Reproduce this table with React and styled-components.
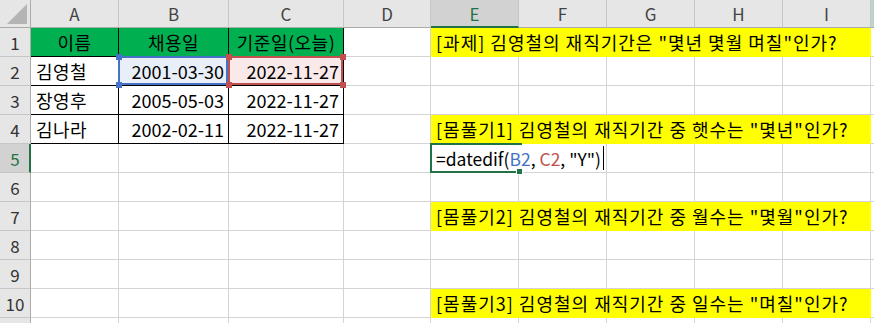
import React from "react";
import styled, { createGlobalStyle, css } from "styled-components";

const Global = createGlobalStyle`
  html, body { margin: 0; padding: 0; background: #fff; overflow: hidden; }
  * { box-sizing: border-box; }
`;

const FONT = `"Noto Sans CJK KR", "Noto Sans", sans-serif`;
const GRID = "#d4d4d4";
const GREEN = "#217346";

const Sheet = styled.div`
  display: grid;
  grid-template-columns: 31px 88px 110px 115px 87px 88px 88px 88px 88px 88px 4px;
  grid-template-rows: 28px repeat(11, 29px);
  width: 874px;
  height: 323px;
  overflow: hidden;
  font-family: ${FONT};
  color: #000;
`;

const Corner = styled.div`
  background: #e6e6e6;
  border-right: 1px solid #ababab;
  border-bottom: 1px solid #ababab;
  position: relative;
  &::after {
    content: "";
    position: absolute;
    right: 3px;
    bottom: 3px;
    width: 0;
    height: 0;
    border-left: 20px solid transparent;
    border-bottom: 20px solid #b4b4b4;
  }
`;

const ColHead = styled.div`
  background: ${(p) => (p.$sel ? "#d2d2d2" : "#e6e6e6")};
  color: ${(p) => (p.$sel ? GREEN : "#444")};
  border-right: 1px solid #c6c6c6;
  border-bottom: ${(p) => (p.$sel ? `2px solid ${GREEN}` : "1px solid #ababab")};
  display: flex;
  align-items: center;
  justify-content: center;
  font-size: 17px;
  padding-top: ${(p) => (p.$sel ? "1px" : "0")};
`;

const EdgeHead = styled.div`
  background: #b9d6c7;
  border-bottom: 1px solid #ababab;
`;

const RowHead = styled.div`
  background: ${(p) => (p.$sel ? "#d2d2d2" : "#e6e6e6")};
  color: ${(p) => (p.$sel ? GREEN : "#333")};
  border-right: ${(p) => (p.$sel ? `2px solid ${GREEN}` : "1px solid #ababab")};
  border-bottom: 1px solid #c6c6c6;
  display: flex;
  align-items: center;
  justify-content: center;
  font-size: 17px;
  padding-left: ${(p) => (p.$sel ? "1px" : "0")};
`;

const Cell = styled.div`
  grid-column: span ${(p) => p.$span || 1};
  position: relative;
  background: ${(p) => p.$bg || "#fff"};
  border-right: 1px solid ${(p) => p.$line || GRID};
  border-bottom: 1px solid ${(p) => p.$line || GRID};
  display: flex;
  align-items: center;
  justify-content: ${(p) =>
    p.$align === "right" ? "flex-end" : p.$align === "center" ? "center" : "flex-start"};
  padding: 0 ${(p) => (p.$align === "right" ? "4px" : "5px")};
  font-size: 18px;
  letter-spacing: ${(p) => p.$track || "0"};
  white-space: nowrap;
  overflow: visible;
  ${(p) =>
    p.$ref &&
    css`
      &::after {
        content: "";
        position: absolute;
        top: -1px;
        left: -1px;
        right: 0;
        bottom: 0;
        border: 2px solid ${p.$ref};
        pointer-events: none;
      }
    `}
`;

const Handle = styled.span`
  position: absolute;
  width: 6px;
  height: 6px;
  background: ${(p) => p.$color};
  ${(p) => (p.$top ? "top: -3px;" : "bottom: -3px;")}
  ${(p) => (p.$left ? "left: -3px;" : "right: -3px;")}
  z-index: 2;
`;

const Editor = styled.div`
  grid-column: span 2;
  position: relative;
  z-index: 1;
  background: #fff;
  border-right: 1px solid ${GRID};
  border-bottom: 1px solid ${GRID};
  display: flex;
  align-items: center;
  padding-left: 5px;
  font-size: 17.5px;
  white-space: pre;
  &::before {
    content: "";
    position: absolute;
    top: -1px;
    left: -1px;
    width: 90px;
    bottom: -1px;
    border: 2px solid ${GREEN};
    border-right: none;
    pointer-events: none;
  }
`;

const FillHandle = styled.span`
  position: absolute;
  left: 85px;
  bottom: -3px;
  width: 5px;
  height: 5px;
  background: ${GREEN};
  border: 1px solid #fff;
  box-sizing: content-box;
`;

const Ref = styled.span`
  color: ${(p) => p.$color};
`;

const Caret = styled.span`
  display: inline-block;
  width: 1px;
  height: 24px;
  background: #000;
  margin-left: 2px;
`;

const EdgeCell = styled.div`
  background: #fff;
  border-bottom: 1px solid ${GRID};
`;

const COLS = ["A", "B", "C", "D", "E", "F", "G", "H", "I"];
const BLUE = "#4472c4";
const RED = "#c0504d";
const YELLOW = "#ffff00";
const BLACK = "#000";

const blanks = (n, key) =>
  Array.from({ length: n }, (_, i) => <Cell key={`${key}-${i}`} />);

const people = [
  ["김영철", "2001-03-30", "2022-11-27"],
  ["장영후", "2005-05-03", "2022-11-27"],
  ["김나라", "2002-02-11", "2022-11-27"],
];

const notes = {
  1: '[과제] 김영철의 재직기간은 "몇년 몇월 며칠"인가?',
  4: '[몸풀기1] 김영철의 재직기간 중 햇수는 "몇년"인가?',
  7: '[몸풀기2] 김영철의 재직기간 중 월수는 "몇월"인가?',
  10: '[몸풀기3] 김영철의 재직기간 중 일수는 "며칠"인가?',
};

function Row({ n }) {
  const cells = [];
  cells.push(
    <RowHead key="h" $sel={n === 5}>
      {n <= 10 ? n : ""}
    </RowHead>
  );
  if (n === 1) {
    ["이름", "채용일", "기준일(오늘)"].forEach((t) =>
      cells.push(
        <Cell key={t} $bg="#00b050" $line={BLACK} $align="center" $track="0.5px">
          {t}
        </Cell>
      )
    );
    cells.push(<Cell key="d" />);
  } else if (n >= 2 && n <= 4) {
    const [name, hire, base] = people[n - 2];
    const first = n === 2;
    cells.push(
      <Cell key="a" $line={BLACK} $track="0.5px">
        {name}
      </Cell>
    );
    cells.push(
      <Cell key="b" $line={BLACK} $align="right" $bg={first ? "#e9eff9" : "#fff"} $ref={first ? BLUE : null}>
        {hire}
        {first && (
          <>
            <Handle $color={BLUE} $top $left />
            <Handle $color={BLUE} $left />
          </>
        )}
      </Cell>
    );
    cells.push(
      <Cell key="c" $line={BLACK} $align="right" $bg={first ? "#f9e9e9" : "#fff"} $ref={first ? RED : null}>
        {base}
        {first && (
          <>
            <Handle $color={RED} $top $left />
            <Handle $color={RED} $top />
            <Handle $color={RED} $left />
            <Handle $color={RED} />
          </>
        )}
      </Cell>
    );
    cells.push(<Cell key="d" />);
  } else {
    cells.push(...blanks(4, "ad"));
  }

  if (notes[n]) {
    cells.push(
      <Cell key="note" $span={5} $bg={YELLOW} $line={YELLOW} $track="1px">
        {notes[n]}
      </Cell>
    );
  } else if (n === 5) {
    cells.push(
      <Editor key="ed">
        {"=datedif("}
        <Ref $color={BLUE}>B2</Ref>
        {", "}
        <Ref $color={RED}>C2</Ref>
        {', "Y")'}
        <Caret />
        <FillHandle />
      </Editor>
    );
    cells.push(...blanks(3, "gi"));
  } else {
    cells.push(...blanks(5, "ei"));
  }
  cells.push(<EdgeCell key="edge" />);
  return cells;
}

export default function App() {
  return (
    <>
      <Global />
      <Sheet>
        <Corner />
        {COLS.map((c) => (
          <ColHead key={c} $sel={c === "E"}>
            {c}
          </ColHead>
        ))}
        <EdgeHead />
        {Array.from({ length: 11 }, (_, i) => (
          <Row key={i} n={i + 1} />
        ))}
      </Sheet>
    </>
  );
}
